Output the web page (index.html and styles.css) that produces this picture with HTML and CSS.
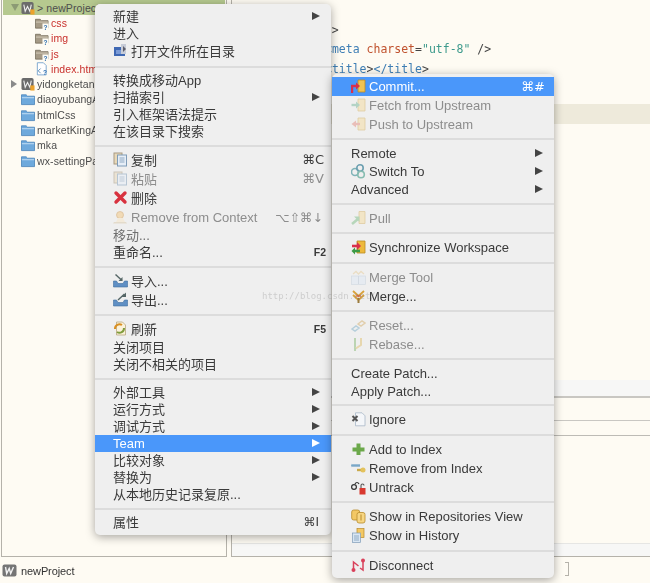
FILE: index.html
```html
<!DOCTYPE html>
<html lang="zh">
<head>
<meta charset="utf-8">
<title>newProject - Team menu</title>
<link rel="stylesheet" href="styles.css">
</head>
<body>
<svg class="defs" width="0" height="0" aria-hidden="true">
  <defs>
    <symbol id="i-project" viewBox="0 0 15 15"><rect x="0.5" y="1" width="13" height="13" rx="2" fill="#6b6b6b"/><path d="M3 4l1.5 7 2.5-5 2.5 5L11 4" fill="none" stroke="#eee" stroke-width="1.2"/><rect x="10" y="9" width="4.5" height="5.5" fill="#eda32c"/></symbol>
    <symbol id="i-project-plain" viewBox="0 0 15 15"><rect x="0.5" y="1.500" width="14" height="12" rx="2" fill="#757575"/><path d="M3.500 4l1.200 6.500 2.500-5 1.500 5L11.500 4" fill="none" stroke="#f2f2f2" stroke-width="1.400"/></symbol>
    <symbol id="i-folder-q" viewBox="0 0 15 15"><path d="M0.5 3.5h5l1.5 1.500h7v8h-13.500z" fill="#a59a86" stroke="#6f6754" stroke-width="0.8"/><path d="M1 6h13v1H1z" fill="#d8d0bd"/><rect x="8" y="8" width="6.500" height="6.500" fill="#fefbf3"/><text x="9.200" y="14.500" class="qmark">?</text></symbol>
    <symbol id="i-file-q" viewBox="0 0 15 15"><path d="M2.500 0.800h6.500l3 3v10h-9.500z" fill="#fff" stroke="#6d9cc9" stroke-width="0.900"/><path d="M6 7L3.500 9.500 6 12" fill="none" stroke="#3f78aa" stroke-width="0.900"/><text x="8.500" y="14" class="qmark">?</text></symbol>
    <symbol id="i-folder" viewBox="0 0 15 15"><path d="M0.500 3h5l1.500 1.500h7.500v9H0.500z" fill="#6ea9dc" stroke="#3f7cb5" stroke-width="0.800"/><path d="M1 5.500h13v1.200H1z" fill="#b8d7f1"/></symbol>
    <symbol id="i-open" viewBox="0 0 15 15"><rect x="1" y="4" width="11" height="9" fill="#3f68b3"/><rect x="8" y="1" width="5" height="10" fill="#c7ccd8"/><path d="M10 3l3 3-3 3z" fill="#5e5e6b"/><rect x="3" y="7" width="5" height="4" fill="#7b9bd6"/></symbol>
    <symbol id="i-copy" viewBox="0 0 15 15"><rect x="1" y="1" width="8" height="11" fill="#e9d9b8" stroke="#a79a83"/><rect x="4.500" y="3" width="9" height="11" fill="#e6eef7" stroke="#7f9cb8"/><path d="M6.500 6h5M6.500 8h5M6.500 10h5" stroke="#8ea8c2"/></symbol>
    <symbol id="i-delete" viewBox="0 0 15 15"><path d="M3 3l9 9M12 3l-9 9" stroke="#d8323f" stroke-width="3.400" stroke-linecap="round"/></symbol>
    <symbol id="i-context" viewBox="0 0 15 15"><circle cx="7" cy="5" r="3.500" fill="#f3c77e" stroke="#c4883c" stroke-width="0.700"/><path d="M1 12h12l1 1.500H0z" fill="#d9c8a8"/><path d="M5 8h5l2 4H3z" fill="#f7e6c6"/></symbol>
    <symbol id="i-import" viewBox="0 0 15 15"><path d="M0.500 8h3l1.500 2.500h5L11.500 8h3v6h-14z" fill="#5f8fc4" stroke="#3f6e9f" stroke-width="0.600"/><path d="M2.500 1.500L9 7.500" stroke="#566" stroke-width="1.400"/><path d="M9.500 4v4h-4z" fill="#566"/></symbol>
    <symbol id="i-export" viewBox="0 0 15 15"><path d="M0.500 8h3l1.500 2.500h5L11.500 8h3v6h-14z" fill="#5f8fc4" stroke="#3f6e9f" stroke-width="0.600"/><path d="M5 8L11.500 2" stroke="#566" stroke-width="1.400"/><path d="M13 0.500v4.500h-4.500z" fill="#566"/></symbol>
    <symbol id="i-refresh" viewBox="0 0 15 15"><path d="M3.500 1h6l3 3v10h-9z" fill="#fbf2da" stroke="#b7a77f" stroke-width="0.800"/><path d="M2 8a4.500 4.500 0 0 1 7-4" fill="none" stroke="#d98f22" stroke-width="2"/><path d="M11 7a4.500 4.500 0 0 1-7 4" fill="none" stroke="#7f9c3c" stroke-width="2"/></symbol>
    <symbol id="i-commit" viewBox="0 0 15 15"><path d="M7 1h7v12H7z" fill="#f1c351" stroke="#bb8c25" stroke-width="0.800"/><path d="M1 14V7h5" fill="none" stroke="#d9304c" stroke-width="2.400"/><path d="M5 3.500l4 3.500-4 3.500z" fill="#d9304c"/></symbol>
    <symbol id="i-fetch" viewBox="0 0 15 15"><path d="M7 1h7v12H7z" fill="#f6dd9e" stroke="#cfa955" stroke-width="0.800"/><path d="M0.500 7h5" stroke="#79b99c" stroke-width="2.400"/><path d="M5 3.500l4 3.500-4 3.500z" fill="#79b99c"/></symbol>
    <symbol id="i-push" viewBox="0 0 15 15"><path d="M7 1h7v12H7z" fill="#f6dd9e" stroke="#cfa955" stroke-width="0.800"/><path d="M4 7h5" stroke="#e58e82" stroke-width="2.400"/><path d="M5 3.500L0.500 7 5 10.500z" fill="#e58e82"/></symbol>
    <symbol id="i-switch" viewBox="0 0 15 15"><circle cx="4" cy="8" r="3.500" fill="none" stroke="#7fb3b8" stroke-width="1.600"/><circle cx="9" cy="4" r="3.200" fill="none" stroke="#6b9fb0" stroke-width="1.600"/><circle cx="10" cy="10.500" r="3.300" fill="none" stroke="#86bcb0" stroke-width="1.600"/></symbol>
    <symbol id="i-pull" viewBox="0 0 15 15"><path d="M8 0.500h6v12H8z" fill="#f6dd9e" stroke="#cfa955" stroke-width="0.800"/><path d="M1 13l6-5" stroke="#7fbe87" stroke-width="2.600"/><path d="M3 5.500h5.500V11z" fill="#7fbe87"/></symbol>
    <symbol id="i-sync" viewBox="0 0 15 15"><path d="M6 1h8v12H6z" fill="#eeb93c" stroke="#b98a22" stroke-width="0.800"/><path d="M1 6h6" stroke="#d9304c" stroke-width="2.600"/><path d="M6 2l4 4-4 4z" fill="#d9304c"/><path d="M3 11h6" stroke="#3c9a45" stroke-width="2.600"/><path d="M4 7.500L0.500 11 4 14.500z" fill="#3c9a45"/></symbol>
    <symbol id="i-mergetool" viewBox="0 0 15 15"><rect x="0.500" y="6" width="14" height="8.500" fill="#dfe9f4" stroke="#b8c6d6" stroke-width="0.700"/><path d="M7.500 6v8" stroke="#b8c6d6"/><path d="M2 4l3-2.500 2.500 2.500 2.500-2.500 3 2.500" fill="none" stroke="#e5cc9a" stroke-width="1.300"/></symbol>
    <symbol id="i-merge" viewBox="0 0 15 15"><path d="M2 2l5.500 5L13 2M2 6l5.500 5L13 6" fill="none" stroke="#d9a23c" stroke-width="1.800"/><path d="M7.500 9v5" stroke="#9a7b3e" stroke-width="2"/><path d="M5 7h5" stroke="#d9593c" stroke-width="1.200"/></symbol>
    <symbol id="i-reset" viewBox="0 0 15 15"><path d="M1 11l4-3 3 2-4 3z" fill="none" stroke="#7fb0c8" stroke-width="1.500"/><path d="M7 6l4-3 3 2-4 3z" fill="none" stroke="#d5b06e" stroke-width="1.500"/></symbol>
    <symbol id="i-rebase" viewBox="0 0 15 15"><path d="M4 1v10" stroke="#88bb77" stroke-width="2"/><path d="M10 1v7l-6 4" fill="none" stroke="#e0c070" stroke-width="2"/><path d="M4 11v3" stroke="#88bb77" stroke-width="2"/></symbol>
    <symbol id="i-ignore" viewBox="0 0 15 15"><path d="M4.500 0.800h6.500l3 3v10h-9.500z" fill="#f4f6f9" stroke="#a8b8c8" stroke-width="0.800"/><path d="M1.500 4l5 5M6.500 4l-5 5" stroke="#555" stroke-width="2"/></symbol>
    <symbol id="i-add" viewBox="0 0 15 15"><path d="M7.500 1.500v11.500M1.500 7.500h12" stroke="#6ba84a" stroke-width="4"/></symbol>
    <symbol id="i-remove" viewBox="0 0 15 15"><path d="M1 4.500h8" stroke="#79a7c7" stroke-width="2.400"/><path d="M1 2.500l-1 2 1 2z" fill="#79a7c7"/><path d="M6 9h6" stroke="#c9a94a" stroke-width="2.400"/><circle cx="12" cy="9" r="2.500" fill="#e3c25c"/></symbol>
    <symbol id="i-untrack" viewBox="0 0 15 15"><circle cx="3" cy="7" r="2.400" fill="none" stroke="#333" stroke-width="1.200"/><path d="M4 4c1-2 3-2 4 0" fill="none" stroke="#333" stroke-width="1.200"/><rect x="8.500" y="8" width="6" height="6.500" fill="#d8382f"/><path d="M10 8V5.500c0-2 3-2 3 0" fill="none" stroke="#555" stroke-width="1.100"/></symbol>
    <symbol id="i-repos" viewBox="0 0 15 15"><rect x="0.700" y="1" width="8" height="10" rx="2" fill="#f3c864" stroke="#b88a2a" stroke-width="0.800"/><rect x="6" y="3.500" width="8" height="10.500" rx="2" fill="#f7d683" stroke="#b88a2a" stroke-width="0.800"/><path d="M10 5.500v6" stroke="#b88a2a"/></symbol>
    <symbol id="i-history" viewBox="0 0 15 15"><rect x="6" y="0.500" width="7" height="9" fill="#f3c864" stroke="#b88a2a" stroke-width="0.700"/><rect x="1.500" y="5" width="8" height="9.500" fill="#d9e6f3" stroke="#7f9cb8" stroke-width="0.700"/><path d="M3 8h5M3 10h5M3 12h5" stroke="#7f9cb8" stroke-width="0.800"/></symbol>
    <symbol id="i-disconnect" viewBox="0 0 15 15"><circle cx="2.500" cy="12" r="2" fill="#d9405a"/><circle cx="12" cy="2.500" r="2" fill="#d9405a"/><path d="M2.500 12V4l5 4" fill="none" stroke="#d9405a" stroke-width="1.500"/><path d="M12 3v9l-3-2" fill="none" stroke="#d9405a" stroke-width="1.500"/></symbol>
  </defs>
</svg>

<div class="workbench">
  <div class="panes">
    <aside class="tree">
      <div class="tree-row selected"><span class="tw open"></span><svg class="ti"><use href="#i-project"/></svg><span class="tl">&gt; newProject [newProject]</span></div>
      <div class="tree-row child"><svg class="ti"><use href="#i-folder-q"/></svg><span class="tl untracked">css</span></div>
      <div class="tree-row child"><svg class="ti"><use href="#i-folder-q"/></svg><span class="tl untracked">img</span></div>
      <div class="tree-row child"><svg class="ti"><use href="#i-folder-q"/></svg><span class="tl untracked">js</span></div>
      <div class="tree-row child"><svg class="ti"><use href="#i-file-q"/></svg><span class="tl untracked">index.html</span></div>
      <div class="tree-row"><span class="tw closed"></span><svg class="ti"><use href="#i-project"/></svg><span class="tl">yidongketang</span></div>
      <div class="tree-row"><span class="tw"></span><svg class="ti"><use href="#i-folder"/></svg><span class="tl">diaoyubangApp</span></div>
      <div class="tree-row"><span class="tw"></span><svg class="ti"><use href="#i-folder"/></svg><span class="tl">htmlCss</span></div>
      <div class="tree-row"><span class="tw"></span><svg class="ti"><use href="#i-folder"/></svg><span class="tl">marketKingApp</span></div>
      <div class="tree-row"><span class="tw"></span><svg class="ti"><use href="#i-folder"/></svg><span class="tl">mka</span></div>
      <div class="tree-row"><span class="tw"></span><svg class="ti"><use href="#i-folder"/></svg><span class="tl">wx-settingPage</span></div>
    </aside>
    <main class="editor">
      <div class="code">
        <div class="code-line outer"><span class="tag">&lt;head</span>&gt;</div>
        <div class="code-line"><span class="tag">&lt;meta</span> <span class="attr">charset</span>=<span class="val">"utf-8"</span> /&gt;</div>
        <div class="code-line"><span class="tag">&lt;title</span>&gt;<span class="tag">&lt;/title</span>&gt;</div>
        <div class="code-line">&nbsp;</div>
        <div class="code-line current">&nbsp;</div>
      </div>
      <div class="bottom">
        <div class="tabs"></div>
        <div class="subtabs"></div>
        <div class="subtabs short"></div>
        <div class="console"></div>
        <div class="foot"></div>
      </div>
    </main>
  </div>
  <footer class="status">
    <svg class="si"><use href="#i-project-plain"/></svg>
    <span>newProject</span>
    <span class="bracket"></span>
  </footer>
</div>

<nav class="menu menu-main">
  <div class="row">新建<i class="arrow"></i></div>
  <div class="row">进入</div>
  <div class="row tall"><svg class="ic"><use href="#i-open"/></svg>打开文件所在目录</div>
  <div class="sep"></div>
  <div class="row">转换成移动App</div>
  <div class="row">扫描索引<i class="arrow"></i></div>
  <div class="row">引入框架语法提示</div>
  <div class="row">在该目录下搜索</div>
  <div class="sep"></div>
  <div class="row tall"><svg class="ic"><use href="#i-copy"/></svg>复制<kbd>⌘C</kbd></div>
  <div class="row tall off"><svg class="ic"><use href="#i-copy"/></svg>粘贴<kbd>⌘V</kbd></div>
  <div class="row tall"><svg class="ic"><use href="#i-delete"/></svg>删除</div>
  <div class="row tall off latin"><svg class="ic"><use href="#i-context"/></svg>Remove from Context<kbd class="combo">⌥⇧⌘↓</kbd></div>
  <div class="row off2">移动...</div>
  <div class="row">重命名...<kbd class="fn">F2</kbd></div>
  <div class="sep"></div>
  <div class="row tall"><svg class="ic"><use href="#i-import"/></svg>导入...</div>
  <div class="row tall"><svg class="ic"><use href="#i-export"/></svg>导出...</div>
  <div class="sep short"></div>
  <div class="row tall"><svg class="ic"><use href="#i-refresh"/></svg>刷新<kbd class="fn">F5</kbd></div>
  <div class="row">关闭项目</div>
  <div class="row">关闭不相关的项目</div>
  <div class="sep"></div>
  <div class="row">外部工具<i class="arrow"></i></div>
  <div class="row">运行方式<i class="arrow"></i></div>
  <div class="row">调试方式<i class="arrow"></i></div>
  <div class="row active latin">Team<i class="arrow"></i></div>
  <div class="row">比较对象<i class="arrow"></i></div>
  <div class="row">替换为<i class="arrow"></i></div>
  <div class="row">从本地历史记录复原...</div>
  <div class="sep"></div>
  <div class="row">属性<kbd class="narrow">⌘I</kbd></div>
</nav>

<nav class="menu menu-team">
  <div class="row tall active"><svg class="ic"><use href="#i-commit"/></svg>Commit...<kbd>⌘#</kbd></div>
  <div class="row tall off"><svg class="ic"><use href="#i-fetch"/></svg>Fetch from Upstream</div>
  <div class="row tall off"><svg class="ic"><use href="#i-push"/></svg>Push to Upstream</div>
  <div class="sep short"></div>
  <div class="row mid">Remote<i class="arrow"></i></div>
  <div class="row mid"><svg class="ic"><use href="#i-switch"/></svg>Switch To<i class="arrow"></i></div>
  <div class="row mid">Advanced<i class="arrow"></i></div>
  <div class="sep"></div>
  <div class="row tall off"><svg class="ic"><use href="#i-pull"/></svg>Pull</div>
  <div class="sep short"></div>
  <div class="row tall"><svg class="ic"><use href="#i-sync"/></svg>Synchronize Workspace</div>
  <div class="sep"></div>
  <div class="row tall off"><svg class="ic"><use href="#i-mergetool"/></svg>Merge Tool</div>
  <div class="row tall"><svg class="ic"><use href="#i-merge"/></svg>Merge...</div>
  <div class="sep short"></div>
  <div class="row tall off"><svg class="ic"><use href="#i-reset"/></svg>Reset...</div>
  <div class="row tall off"><svg class="ic"><use href="#i-rebase"/></svg>Rebase...</div>
  <div class="sep short"></div>
  <div class="row mid">Create Patch...</div>
  <div class="row mid">Apply Patch...</div>
  <div class="sep short"></div>
  <div class="row tall"><svg class="ic"><use href="#i-ignore"/></svg>Ignore</div>
  <div class="sep"></div>
  <div class="row tall"><svg class="ic"><use href="#i-add"/></svg>Add to Index</div>
  <div class="row tall"><svg class="ic"><use href="#i-remove"/></svg>Remove from Index</div>
  <div class="row tall"><svg class="ic"><use href="#i-untrack"/></svg>Untrack</div>
  <div class="sep short"></div>
  <div class="row tall"><svg class="ic"><use href="#i-repos"/></svg>Show in Repositories View</div>
  <div class="row tall"><svg class="ic"><use href="#i-history"/></svg>Show in History</div>
  <div class="sep"></div>
  <div class="row tall"><svg class="ic"><use href="#i-disconnect"/></svg>Disconnect</div>
</nav>

<div class="watermark">http://blog.csdn.net/</div>
</body>
</html>
```
FILE: styles.css
```css
* { box-sizing: border-box; }
html, body { margin: 0; height: 100%; }
body {
  width: 650px;
  height: 583px;
  overflow: hidden;
  position: relative;
  background: #fefbf3;
  font-family: "Liberation Sans", "Noto Sans CJK SC", sans-serif;
  color: #3a3a3a;
  filter: blur(0.35px);
}
.defs { position: absolute; }
.qmark { font: bold 7px "Liberation Sans", sans-serif; fill: #2f6fb0; }

.workbench { display: flex; flex-direction: column; height: 583px; }
.panes { display: flex; height: 557px; gap: 4px; padding-left: 1px; }

.tree {
  width: 226px;
  border-left: 1px solid #b5b2aa;
  border-right: 1px solid #b5b2aa;
  border-bottom: 1px solid #b5b2aa;
  padding: 0 1px;
}
.tree-row {
  display: flex;
  align-items: center;
  height: 15.3px;
  font-size: 10.500px;
  letter-spacing: 0.1px;
  white-space: nowrap;
  overflow: hidden;
  padding-left: 4px;
  color: #4d4d4d;
}
.tree-row.selected { background: #b6c98f; }
.tree-row.child { padding-left: 32px; }
.tw { width: 12px; height: 8px; flex: none; margin-right: 2px; }
.tw.open { border-top: 7px solid #8c9a74; border-left: 4px solid transparent; border-right: 4px solid transparent; height: 0; width: 8px; margin: 0 2px 0 4px; }
.tw.closed { border-left: 6px solid #8a8a8a; border-top: 4px solid transparent; border-bottom: 4px solid transparent; height: 0; width: 6px; margin: 0 4px 0 4px; }
.ti { width: 14px; height: 14px; flex: none; margin-right: 2px; }
.untracked { color: #c9302c; }

.editor { flex: 1; display: flex; flex-direction: column; border-left: 1px solid #b5b2aa; min-width: 0; }
.code {
  height: 380px;
  padding-top: 21px;
  font: 11.500px/19.300px "DejaVu Sans Mono", monospace;
  color: #444;
}
.code-line { padding-left: 93px; white-space: pre; height: 19.300px; }
.code-line.outer { padding-left: 65px; }
.code-line.current { background: #eeeadb; margin-top: 6px; height: 20px; }
.tag { color: #3f7fb5; }
.attr { color: #c0522e; }
.val { color: #3d9a8c; }

.bottom { height: 177px; display: flex; flex-direction: column; background: #fefbf3; }
.tabs { height: 18px; background: #f7f7f6; border-bottom: 2px solid #c9c7c2; }
.subtabs { height: 23px; border-bottom: 1px solid #c9c7c2; }
.subtabs.short { height: 15px; border-bottom: 1px solid #bdbbb5; }
.console { flex: 1; }
.foot { height: 14px; background: #f7f7f6; border-bottom: 1px solid #b5b2aa; border-top: 1px solid #e6e6e4; }

.status { height: 26px; display: flex; align-items: center; gap: 4px; padding: 1px 0 0 2px; font-size: 11px; letter-spacing: -0.1px; color: #333; position: relative; }
.si { width: 15px; height: 15px; }
.bracket { position: absolute; left: 565px; top: 5px; width: 4px; height: 14px; border: 1px solid #b5b2aa; border-left: 0; }

.menu {
  position: absolute;
  background: #efefef;
  border-radius: 5px;
  box-shadow: 0 2px 10px rgba(0, 0, 0, .35);
  font-size: 13px;
  color: #3a3a3a;
}
.menu-main { left: 95px; top: 4px; width: 236px; padding: 4px 0; }
.menu-team { left: 332px; top: 74px; width: 222px; padding: 3px 0; }

.row {
  display: flex;
  align-items: center;
  height: 17px;
  padding-left: 18px;
  white-space: nowrap;
  position: relative;
}
.menu-main .row { padding-bottom: 2px; }
.menu-main .row.latin { padding-bottom: 0; }
.menu-team .row { padding-left: 19px; }
.row.mid { height: 18px; }
.row.tall { height: 19px; }
.row.off { color: #8d8d8d; }
.row.off .ic { opacity: .5; }
.row.off2 { color: #6f6f6f; }
.row.active { background: #4a97fa; color: #fff; }
.row.active .arrow { border-left-color: #fff; }
.ic { width: 15px; height: 15px; flex: none; margin-right: 3px; }
.arrow {
  position: absolute;
  right: 11px;
  top: 50%;
  margin-top: -4.500px;
  border-left: 8px solid #444;
  border-top: 4.500px solid transparent;
  border-bottom: 4.500px solid transparent;
}
kbd {
  margin-left: auto;
  padding-right: 7px;
  font: 13px "DejaVu Sans", "Liberation Sans", sans-serif;
}
kbd.combo { font-size: 12.500px; padding-right: 8px; }
kbd.narrow { padding-right: 12px; font-size: 12px; }
kbd.fn { font: bold 10.500px "Liberation Sans", sans-serif; padding-right: 5px; }
.menu-team kbd { padding-right: 9px; }
.sep { height: 11px; display: flex; align-items: center; }
.sep.short { height: 10px; }
.sep::after { content: ""; flex: 1; height: 2px; background: #dcdcdc; }

.watermark {
  position: absolute;
  left: 262px;
  top: 291px;
  font: 9px "DejaVu Sans Mono", monospace;
  color: rgba(120, 120, 120, .28);
  pointer-events: none;
}
```
